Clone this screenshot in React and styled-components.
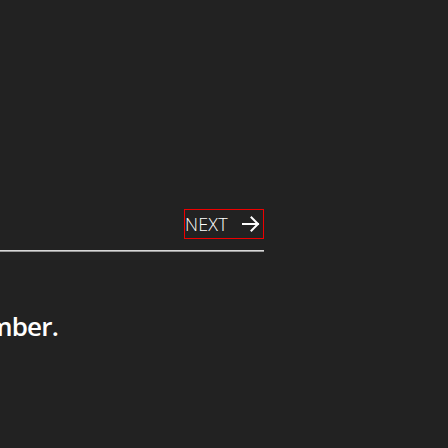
import React from "react";
import styled, { createGlobalStyle } from "styled-components";

const GlobalStyle = createGlobalStyle`
  html, body {
    margin: 0;
    padding: 0;
    background: #222222;
    overflow: hidden;
  }
  body {
    font-family: "Open Sans", "Liberation Sans", sans-serif;
    color: #ffffff;
  }
`;

const Page = styled.div`
  width: 448px;
  height: 448px;
  background: #222222;
  padding-top: 209px;
  box-sizing: border-box;
`;

const Panel = styled.div`
  width: 264px;
  display: flex;
  flex-direction: column;
`;

const ButtonRow = styled.div`
  display: flex;
  justify-content: flex-end;
`;

const NextButton = styled.button`
  display: flex;
  align-items: center;
  justify-content: space-between;
  width: 80px;
  height: 30px;
  padding: 0 3px 0 0;
  margin: 0;
  box-sizing: border-box;
  background: transparent;
  border: 1px solid #ee0000;
  color: #ffffff;
  font-family: "Open Sans", "Liberation Sans", sans-serif;
  font-weight: 300;
  font-size: 18px;
  letter-spacing: 0.2px;
  cursor: pointer;
`;

const Divider = styled.div`
  height: 2px;
  margin-top: 11px;
  background: linear-gradient(#d8d8d8 50%, #9a9a9a 50%);
`;

const PromptRow = styled.div`
  width: 58px;
  display: flex;
  justify-content: flex-end;
  margin-top: 58px;
`;

const Prompt = styled.h2`
  margin: 0;
  white-space: nowrap;
  font-family: "Open Sans", "Liberation Sans", sans-serif;
  font-weight: 600;
  font-size: 26px;
  letter-spacing: -0.8px;
  line-height: 32px;
  color: #ffffff;
`;

const ArrowIcon = () => (
  <svg width="18" height="16" viewBox="0 0 18 16" fill="none">
    <path d="M1 8h15M9.5 1.5L16 8l-6.5 6.5" stroke="#ffffff" strokeWidth="2" strokeLinecap="square" />
  </svg>
);

export default function App() {
  return (
    <>
      <GlobalStyle />
      <Page>
        <Panel>
          <ButtonRow>
            <NextButton>
              NEXT
              <ArrowIcon />
            </NextButton>
          </ButtonRow>
          <Divider />
        </Panel>
        <PromptRow>
          <Prompt>Enter your number.</Prompt>
        </PromptRow>
      </Page>
    </>
  );
}
